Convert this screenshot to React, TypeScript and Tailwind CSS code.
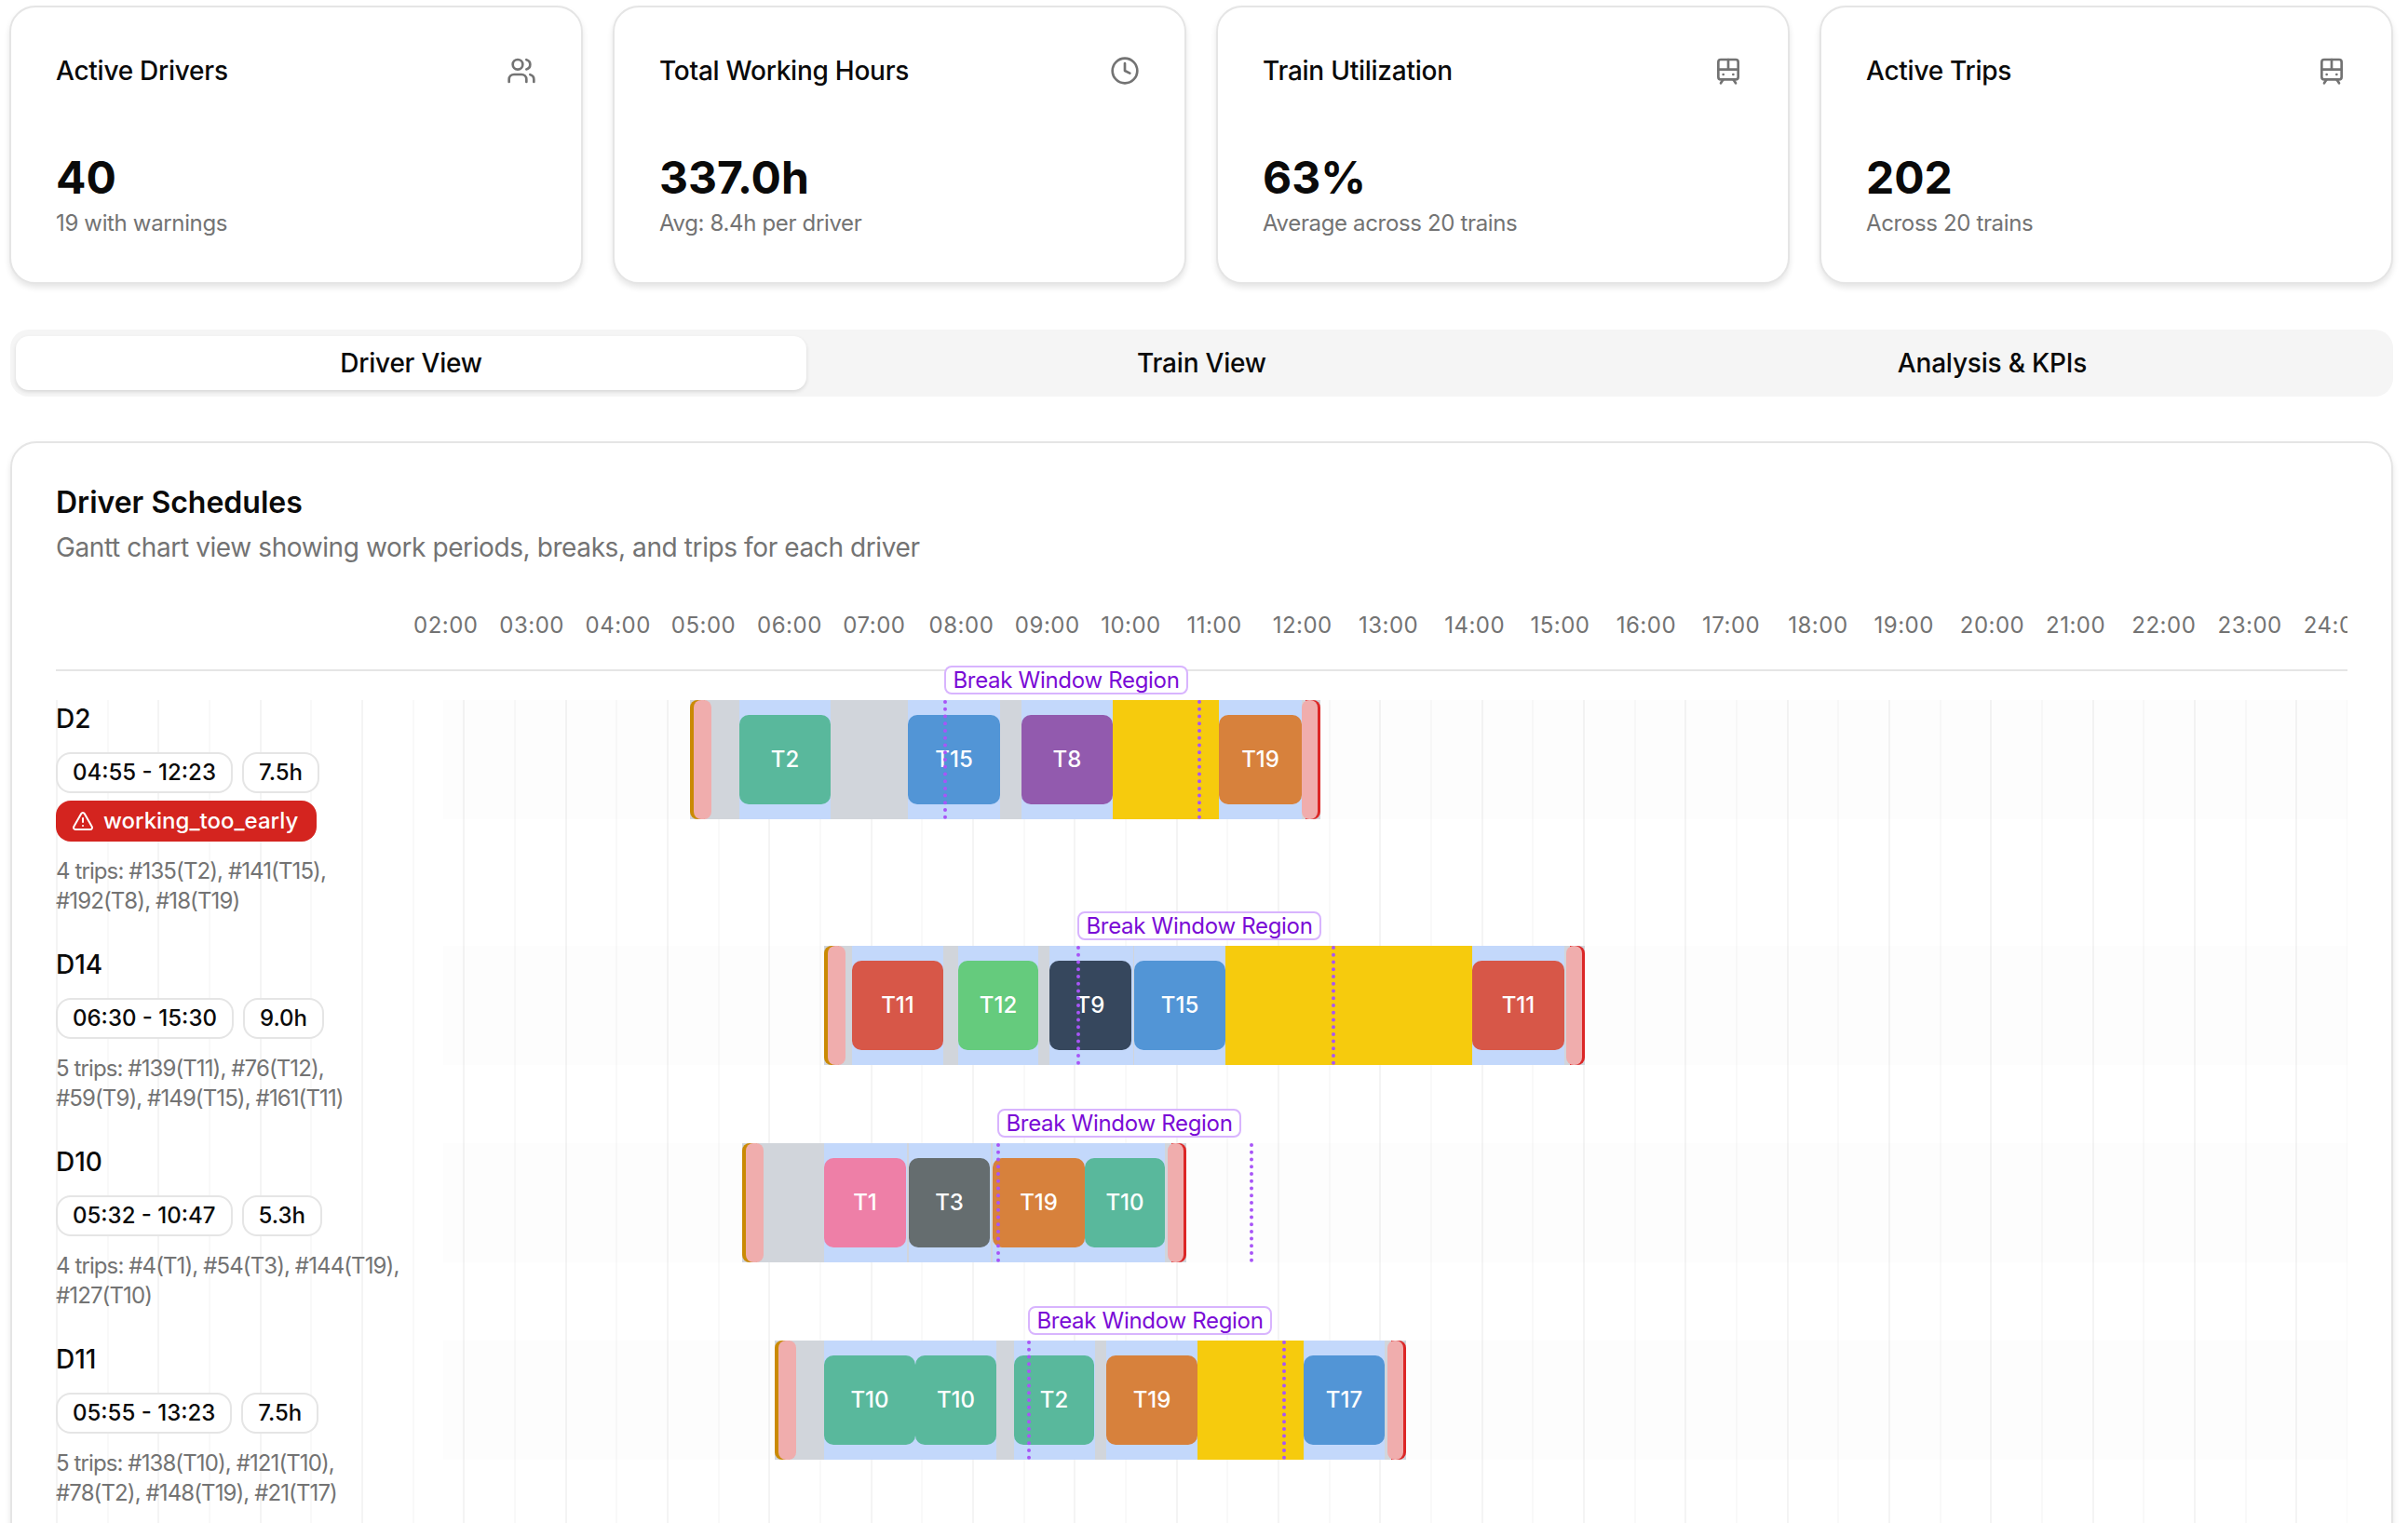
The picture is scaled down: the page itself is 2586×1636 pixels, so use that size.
import { Clock, TramFront, TriangleAlert, Users, type LucideIcon } from "lucide-react";

type Stat = { title: string; value: string; note: string; icon: LucideIcon };

type Trip = { from: number; to: number; label: string; color: string };

type Driver = {
  name: string;
  time: string;
  hours: string;
  warning?: string;
  trips: string[];
  start: number;
  end: number;
  bands: number[][];
  work: Trip[];
  breakSpan?: number[];
  windowStart: number;
  windowEnd: number;
};

const GREEN = "#59b89c";
const BLUE = "#5295d6";
const ORANGE = "#d7813c";
const RED = "#d75748";

// x values below are page pixels, the track starts at this x
const TRACK_X = 476;

const stats: Stat[] = [
  { title: "Active Drivers", value: "40", note: "19 with warnings", icon: Users },
  { title: "Total Working Hours", value: "337.0h", note: "Avg: 8.4h per driver", icon: Clock },
  { title: "Train Utilization", value: "63%", note: "Average across 20 trains", icon: TramFront },
  { title: "Active Trips", value: "202", note: "Across 20 trains", icon: TramFront },
];

const hours = Array.from({ length: 23 }, (_, i) => `${String(i + 2).padStart(2, "0")}:00`);

const drivers: Driver[] = [
  {
    name: "D2",
    time: "04:55 - 12:23",
    hours: "7.5h",
    warning: "working_too_early",
    trips: ["4 trips: #135(T2), #141(T15),", "#192(T8), #18(T19)"],
    start: 741,
    end: 1418,
    bands: [[794, 892], [975, 1074], [1097, 1195], [1309, 1398]],
    work: [
      { from: 794, to: 892, label: "T2", color: GREEN },
      { from: 975, to: 1074, label: "T15", color: BLUE },
      { from: 1097, to: 1195, label: "T8", color: "#925aae" },
      { from: 1309, to: 1398, label: "T19", color: ORANGE },
    ],
    breakSpan: [1195, 1309],
    windowStart: 1015,
    windowEnd: 1288,
  },
  {
    name: "D14",
    time: "06:30 - 15:30",
    hours: "9.0h",
    trips: ["5 trips: #139(T11), #76(T12),", "#59(T9), #149(T15), #161(T11)"],
    start: 885,
    end: 1702,
    bands: [[915, 1013], [1029, 1115], [1127, 1217], [1218, 1316], [1581, 1680]],
    work: [
      { from: 915, to: 1013, label: "T11", color: RED },
      { from: 1029, to: 1115, label: "T12", color: "#65cb7d" },
      { from: 1127, to: 1215, label: "T9", color: "#36475d" },
      { from: 1218, to: 1316, label: "T15", color: BLUE },
      { from: 1581, to: 1680, label: "T11", color: RED },
    ],
    breakSpan: [1316, 1581],
    windowStart: 1158,
    windowEnd: 1432,
  },
  {
    name: "D10",
    time: "05:32 - 10:47",
    hours: "5.3h",
    trips: ["4 trips: #4(T1), #54(T3), #144(T19),", "#127(T10)"],
    start: 797,
    end: 1274,
    bands: [[885, 974], [976, 1064], [1066, 1251]],
    work: [
      { from: 885, to: 973, label: "T1", color: "#ee7fa7" },
      { from: 976, to: 1063, label: "T3", color: "#656d6f" },
      { from: 1066, to: 1165, label: "T19", color: ORANGE },
      { from: 1165, to: 1251, label: "T10", color: GREEN },
    ],
    windowStart: 1072,
    windowEnd: 1344,
  },
  {
    name: "D11",
    time: "05:55 - 13:23",
    hours: "7.5h",
    trips: ["5 trips: #138(T10), #121(T10),", "#78(T2), #148(T19), #21(T17)"],
    start: 832,
    end: 1510,
    bands: [[885, 1070], [1089, 1176], [1188, 1286], [1400, 1487]],
    work: [
      { from: 885, to: 983, label: "T10", color: GREEN },
      { from: 983, to: 1070, label: "T10", color: GREEN },
      { from: 1089, to: 1175, label: "T2", color: GREEN },
      { from: 1188, to: 1286, label: "T19", color: ORANGE },
      { from: 1400, to: 1487, label: "T17", color: BLUE },
    ],
    breakSpan: [1286, 1400],
    windowStart: 1105,
    windowEnd: 1379,
  },
];

function StatCard({ stat }: { stat: Stat }) {
  const Icon = stat.icon;
  return (
    <div className="h-[299px] rounded-[28px] border-2 border-[#e5e5e5] bg-white px-12 pt-12 shadow-[0_4px_6px_rgba(0,0,0,0.1)]">
      <div className="flex h-10 items-center justify-between">
        <span className="text-[28px] leading-10 font-medium tracking-[-0.25px] text-[#0a0a0a]">{stat.title}</span>
        <Icon size={32} className="text-[#737373]" />
      </div>
      <div className="mt-[67px] text-[48px] leading-[56px] font-bold text-[#0a0a0a]">{stat.value}</div>
      <div className="mt-[5px] text-2xl leading-8 tracking-[-0.35px] text-[#737373]">{stat.note}</div>
    </div>
  );
}

function Pill({ children }: { children: string }) {
  return (
    <span className="flex h-11 items-center rounded-2xl border-2 border-[#e5e5e5] bg-white px-4 text-2xl font-medium text-[#0a0a0a]">
      {children}
    </span>
  );
}

function Dotted({ x }: { x: number }) {
  return (
    <div
      className="absolute top-0 bottom-0 z-20 border-l-4 border-dotted border-[#a855f7]"
      style={{ left: x - TRACK_X - 2 }}
    />
  );
}

function Track({ driver }: { driver: Driver }) {
  const { start, end } = driver;
  const at = (from: number, to: number) => ({ left: from - TRACK_X, width: to - from });
  return (
    <div className="relative h-32 flex-1 bg-[#00000002]">
      <div className="absolute top-0 bottom-0 bg-[#d1d5db]" style={at(start, end)} />
      {driver.bands.map(([from, to]) => (
        <div key={from} className="absolute top-0 bottom-0 bg-[#c3d8fb]" style={at(from, to)} />
      ))}
      {driver.breakSpan && (
        <div className="absolute top-0 bottom-0 bg-[#f6cb0d]" style={at(driver.breakSpan[0], driver.breakSpan[1])} />
      )}
      {driver.work.map((trip) => (
        <div
          key={trip.from}
          className="absolute top-4 flex h-24 items-center justify-center rounded-[10px] text-2xl font-medium text-white"
          style={{ ...at(trip.from, trip.to), backgroundColor: trip.color }}
        >
          {trip.label}
        </div>
      ))}
      <div className="absolute top-0 bottom-0 rounded-l-lg bg-[#ca8a04]" style={at(start, start + 16)} />
      <div className="absolute top-0 bottom-0 rounded-lg bg-[#f0adad]" style={at(start + 4, start + 23)} />
      <div className="absolute top-0 bottom-0 rounded-r-lg bg-[#dc2626]" style={at(end - 16, end)} />
      <div className="absolute top-0 bottom-0 rounded-lg bg-[#f0adad]" style={at(end - 20, end - 3)} />
      <Dotted x={driver.windowStart} />
      <Dotted x={driver.windowEnd} />
      <div
        className="absolute top-[-37px] z-30 flex h-[31px] w-[262px] items-center justify-center rounded-lg border-2 border-[#d8b4fe] bg-white text-2xl tracking-[-0.3px] text-[#7a0bd6]"
        style={{ left: driver.windowStart - TRACK_X - 1 }}
      >
        Break Window Region
      </div>
    </div>
  );
}

function DriverRow({ driver }: { driver: Driver }) {
  return (
    <div className="flex items-start">
      <div className="w-[416px] shrink-0">
        <div className="text-[28px] leading-10 font-medium text-[#0a0a0a]">{driver.name}</div>
        <div className="mt-4 flex gap-[10px]">
          <Pill>{driver.time}</Pill>
          <Pill>{driver.hours}</Pill>
        </div>
        {driver.warning && (
          <div className="mt-2 flex h-11 w-[280px] items-center gap-[10px] rounded-2xl bg-[#d4241f] pl-[17px] text-2xl font-medium text-white">
            <TriangleAlert size={24} strokeWidth={2} />
            {driver.warning}
          </div>
        )}
        <div className="mt-4 text-2xl leading-8 tracking-[-0.9px] whitespace-nowrap text-[#737373]">
          {driver.trips.map((line) => (
            <div key={line}>{line}</div>
          ))}
        </div>
      </div>
      <Track driver={driver} />
    </div>
  );
}

export default function App() {
  return (
    <div className="h-[1636px] overflow-hidden bg-white pt-[6px] pr-[16px] pl-[11px] font-[Inter,sans-serif]">
      <div className="-ml-px grid grid-cols-4 gap-8">
        {stats.map((stat) => (
          <StatCard key={stat.title} stat={stat} />
        ))}
      </div>

      <div className="mt-[49px] grid h-[72px] grid-cols-3 items-center rounded-[20px] bg-[#f5f5f5] px-[6px] text-[28px] font-medium tracking-[-0.2px] text-[#0a0a0a]">
        <div className="flex h-[58px] items-center justify-center rounded-[14px] bg-white shadow-[0_2px_4px_rgba(0,0,0,0.12)]">
          Driver View
        </div>
        <div className="text-center">Train View</div>
        <div className="text-center">Analysis &amp; KPIs</div>
      </div>

      <div className="mt-[48px] rounded-[28px] border-2 border-[#e5e5e5] bg-white px-[47px] pt-[44px] shadow-[0_4px_6px_rgba(0,0,0,0.1)]">
        <div className="text-[32px] leading-10 font-semibold text-[#0a0a0a]">Driver Schedules</div>
        <div className="mt-2 text-[28px] leading-10 tracking-[-0.4px] text-[#737373]">
          Gantt chart view showing work periods, breaks, and trips for each driver
        </div>

        <div className="mt-[48px] flex overflow-hidden border-b-2 border-[#e5e5e5] pb-[31px] pl-[384px]">
          {hours.map((hour) => (
            <div key={hour} className="w-[92.28px] shrink-0 text-2xl leading-8 tracking-[0.5px] text-[#737373]">
              {hour}
            </div>
          ))}
        </div>

        <div className="mt-[31px] flex flex-col gap-8 bg-[repeating-linear-gradient(90deg,#f4f4f4_0,#f4f4f4_2px,transparent_2px,transparent_54.67px,#f9f9f9_54.67px,#f9f9f9_56.67px,transparent_56.67px,transparent_109.34px)] pb-[200px]">
          {drivers.map((driver) => (
            <DriverRow key={driver.name} driver={driver} />
          ))}
        </div>
      </div>
    </div>
  );
}
